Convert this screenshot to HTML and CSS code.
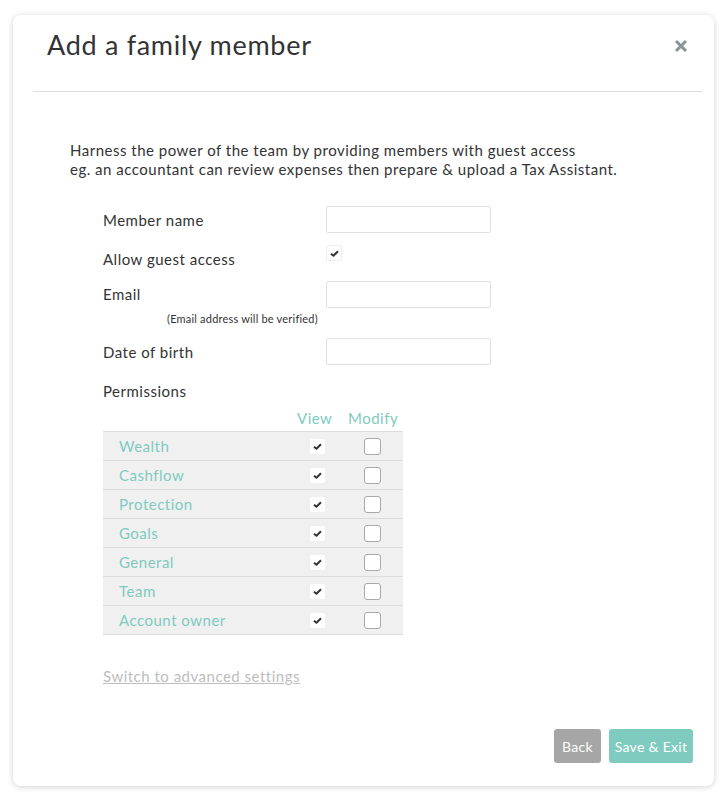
FILE: index.html
```html
<!DOCTYPE html>
<html>
<head>
<meta charset="utf-8">
<link rel="stylesheet" href="styles.css">
</head>
<body>
<div class="modal">
  <div class="modal-header">
    <h1 class="title">Add a family member</h1>
    <svg class="close" viewBox="0 0 14 14" width="14" height="14"><path d="M2 2 L12 12 M12 2 L2 12" stroke="#8a9399" stroke-width="3" stroke-linecap="butt"/></svg>
  </div>
  <div class="modal-body">
    <p class="intro">Harness the power of the team by providing members with guest access<br>eg. an accountant can review expenses then prepare &amp; upload a Tax Assistant.</p>
    <div class="form">
      <div class="row row-name">
        <label class="label">Member name</label>
        <span class="input"></span>
      </div>
      <div class="row row-guest">
        <label class="label">Allow guest access</label>
        <span class="check checked"><svg viewBox="0 0 10 8" width="9" height="7"><path d="M1 4.2 L3.8 6.6 L9 1.4" fill="none" stroke="#333" stroke-width="2.2" stroke-linejoin="round"/></svg></span>
      </div>
      <div class="row row-email">
        <label class="label">Email</label>
        <span class="input"></span>
      </div>
      <div class="note">(Email address will be verified)</div>
      <div class="row row-dob">
        <label class="label">Date of birth</label>
        <span class="input"></span>
      </div>
      <div class="perm-title">Permissions</div>
      <div class="perm">
        <div class="perm-head"><span class="h-view">View</span><span class="h-mod">Modify</span></div>
        <div class="perm-row"><span class="perm-name">Wealth</span><span class="vcheck"><svg viewBox="0 0 10 8" width="9" height="7"><path d="M1 4.2 L3.8 6.6 L9 1.4" fill="none" stroke="#333" stroke-width="2.2" stroke-linejoin="round"/></svg></span><span class="mcheck"></span></div>
        <div class="perm-row"><span class="perm-name">Cashflow</span><span class="vcheck"><svg viewBox="0 0 10 8" width="9" height="7"><path d="M1 4.2 L3.8 6.6 L9 1.4" fill="none" stroke="#333" stroke-width="2.2" stroke-linejoin="round"/></svg></span><span class="mcheck"></span></div>
        <div class="perm-row"><span class="perm-name">Protection</span><span class="vcheck"><svg viewBox="0 0 10 8" width="9" height="7"><path d="M1 4.2 L3.8 6.6 L9 1.4" fill="none" stroke="#333" stroke-width="2.2" stroke-linejoin="round"/></svg></span><span class="mcheck"></span></div>
        <div class="perm-row"><span class="perm-name">Goals</span><span class="vcheck"><svg viewBox="0 0 10 8" width="9" height="7"><path d="M1 4.2 L3.8 6.6 L9 1.4" fill="none" stroke="#333" stroke-width="2.2" stroke-linejoin="round"/></svg></span><span class="mcheck"></span></div>
        <div class="perm-row"><span class="perm-name">General</span><span class="vcheck"><svg viewBox="0 0 10 8" width="9" height="7"><path d="M1 4.2 L3.8 6.6 L9 1.4" fill="none" stroke="#333" stroke-width="2.2" stroke-linejoin="round"/></svg></span><span class="mcheck"></span></div>
        <div class="perm-row"><span class="perm-name">Team</span><span class="vcheck"><svg viewBox="0 0 10 8" width="9" height="7"><path d="M1 4.2 L3.8 6.6 L9 1.4" fill="none" stroke="#333" stroke-width="2.2" stroke-linejoin="round"/></svg></span><span class="mcheck"></span></div>
        <div class="perm-row"><span class="perm-name">Account owner</span><span class="vcheck"><svg viewBox="0 0 10 8" width="9" height="7"><path d="M1 4.2 L3.8 6.6 L9 1.4" fill="none" stroke="#333" stroke-width="2.2" stroke-linejoin="round"/></svg></span><span class="mcheck"></span></div>
      </div>
      <a class="advanced">Switch to advanced settings</a>
    </div>
  </div>
  <div class="modal-footer">
    <button class="btn btn-back">Back</button>
    <button class="btn btn-save">Save &amp; Exit</button>
  </div>
</div>
</body>
</html>
```
FILE: styles.css
```css
* { box-sizing: border-box; }
html, body { margin: 0; padding: 0; background: #fff; }
body {
  font-family: Lato, "Liberation Sans", sans-serif;
  color: #333;
  padding: 15px 13px 15px 13px;
  letter-spacing: 0.5px;
}
.modal {
  width: 701px;
  height: 771px;
  background: #fff;
  border-radius: 8px;
  box-shadow: 0 1px 6px rgba(0,0,0,0.18);
  display: flex;
  flex-direction: column;
}
.modal-header {
  margin: 0 12px 0 20px;
  height: 77px;
  border-bottom: 1px solid #dcdfe0;
  display: flex;
  justify-content: space-between;
  align-items: flex-start;
  padding: 13px 0 0 14px;
}
.title {
  margin: 0;
  font-size: 27px;
  font-weight: 400;
  color: #333;
  line-height: 33px;
  letter-spacing: 0.7px;
}
.close {
  margin: 11px 14px 0 0;
  display: block;
}
.modal-body {
  flex: 1;
  padding: 49px 0 0 57px;
}
.intro {
  margin: 0;
  font-size: 15px;
  line-height: 19px;
  color: #333;
}
.form {
  margin-left: 33px;
  padding-top: 27px;
}
.row {
  display: flex;
  align-items: center;
  height: 27px;
}
.label {
  width: 223px;
  font-size: 15px;
  color: #333;
}
.input {
  width: 165px;
  height: 27px;
  border: 1px solid #dfe2e4;
  border-radius: 2px;
  background: #fff;
}
.row-guest { margin-top: 12px; height: 26px; }
.row-guest .label { padding-top: 2px; }
.check {
  width: 16px;
  height: 16px;
  border: 1px solid #eceeef;
  border-radius: 2px;
  display: flex;
  align-items: center;
  justify-content: center;
  align-self: flex-start;
}
.row-email { margin-top: 10px; }
.row-email .label { align-self: flex-start; line-height: 27px; }
.note {
  font-size: 11px;
  letter-spacing: 0.2px;
  color: #333;
  margin: 4px 0 0 64px;
  line-height: 14px;
}
.row-dob { margin-top: 12px; }
.perm-title {
  font-size: 15px;
  margin-top: 16px;
  line-height: 20px;
}
.perm { width: 300px; }
.perm-head {
  display: flex;
  font-size: 15px;
  color: #7ecbbe;
  height: 30px;
  align-items: center;
  padding-top: 3px;
}
.h-view { margin-left: 194px; width: 51px; }
.perm-row {
  display: flex;
  align-items: center;
  height: 29px;
  background: #f0f0f0;
  border-top: 1px solid #dcdcdc;
}
.perm-row:last-child { border-bottom: 1px solid #dcdcdc; height: 30px; }
.perm-name {
  width: 207px;
  padding-left: 16px;
  font-size: 15px;
  color: #7ecbbe;
}
.vcheck {
  width: 15px;
  height: 15px;
  background: #fff;
  border-radius: 2px;
  display: flex;
  align-items: center;
  justify-content: center;
}
.mcheck {
  margin-left: 39px;
  width: 17px;
  height: 17px;
  background: #fff;
  border: 1px solid #a9a9a9;
  border-radius: 3px;
}
.advanced {
  display: inline-block;
  margin-top: 32px;
  font-size: 15px;
  color: #bdbdbd;
  text-decoration: underline;
}
.modal-footer {
  display: flex;
  justify-content: flex-end;
  gap: 8px;
  padding: 0 21px 23px 0;
}
.btn {
  border: none;
  height: 34px;
  border-radius: 3px;
  color: #fff;
  font-family: Lato, "Liberation Sans", sans-serif;
  font-size: 14px;
  letter-spacing: 0.3px;
  padding: 0;
}
.btn-back { width: 47px; background: #a6a6a6; }
.btn-save { width: 84px; background: #7fcbbf; }
```
